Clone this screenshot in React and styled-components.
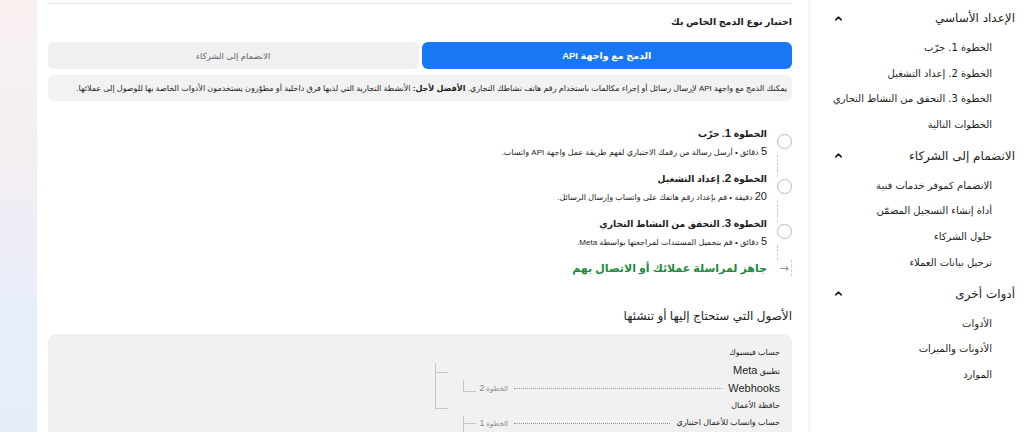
import React from "react";
import styled, { createGlobalStyle } from "styled-components";
import { ChevronUp } from "lucide-react";

const Global = createGlobalStyle`
  html, body { margin: 0; padding: 0; background: #fff; }
  body { font-family: "Liberation Sans", "DejaVu Sans", sans-serif; color: #1c1e21; }
`;

const Page = styled.div`
  display: flex;
  height: 432px;
  overflow: hidden;
  direction: rtl;
`;

const Sidebar = styled.nav`
  width: 216px;
  flex: none;
  background: #fff;
  border-left: 3px solid #f6f7f9;
  padding: 0 9px 0 22px;
  box-sizing: border-box;
`;

const Section = styled.div``;

const SectionHeader = styled.div`
  display: flex;
  justify-content: space-between;
  align-items: center;
  padding-top: 8px;
  height: 20px;
  color: #1c1e21;
  font-family: "DejaVu Sans", sans-serif;
  font-size: 12px;
`;

const Items = styled.ul`
  list-style: none;
  margin: 7px 0 0;
  padding: 0 23px 0 0;
`;

const Item = styled.li`
  height: 25.7px;
  line-height: 26px;
  font-size: 10px;
  font-family: "DejaVu Sans", sans-serif;
  color: #1c1e21;
  white-space: nowrap;
`;

const Main = styled.main`
  flex: 1;
  background: #fff;
  padding: 0 16px 0 11px;
  min-width: 0;
`;

const Strip = styled.div`
  width: 37px;
  flex: none;
  background: linear-gradient(to bottom, #f8f0ef 0%, #f5eff2 35%, #eeedf6 52%, #e8eef8 70%, #e5eef8 100%);
`;

const Divider = styled.div`
  margin-top: 3px;
  height: 1px;
  background: #e6e6e6;
`;

const Heading = styled.h2`
  margin: ${(p) => p.$mt || 0}px 0 0;
  font-size: ${(p) => p.$size || 10}px;
  line-height: 16px;
  font-weight: ${(p) => (p.$bold ? "bold" : "normal")};
  color: #1c1e21;
`;

const Tabs = styled.div`
  display: grid;
  grid-template-columns: 1fr 1fr;
  gap: 3px;
  margin-top: 12px;
`;

const Tab = styled.div`
  height: 27px;
  border-radius: 6px;
  display: flex;
  align-items: center;
  justify-content: center;
  font-size: ${(p) => (p.$active ? "9.5px" : "8.5px")};
  font-weight: ${(p) => (p.$active ? "bold" : "normal")};
  background: ${(p) => (p.$active ? "#1877f2" : "#f0f0f0")};
  color: ${(p) => (p.$active ? "#fff" : "#606770")};
`;

const Info = styled.div`
  margin-top: 6px;
  height: 26px;
  border-radius: 6px;
  background: #f2f2f2;
  padding: 0 5px;
  display: flex;
  align-items: center;
  font-size: 8px;
  white-space: nowrap;
  overflow: hidden;
  color: #1c1e21;
`;

const Steps = styled.div`
  margin-top: 24px;
`;

const StepRow = styled.div`
  display: grid;
  grid-template-columns: 15px 1fr;
  column-gap: 10px;
  height: 45px;
`;

const Rail = styled.div`
  display: flex;
  flex-direction: column;
  align-items: flex-end;
`;

const TopDash = styled.div`
  height: 7px;
  width: 0;
  border-left: 1px dashed ${(p) => (p.$show ? "#cfcfcf" : "transparent")};
`;

const Circle = styled.div`
  margin-top: 2px;
  width: 13px;
  height: 13px;
  border-radius: 50%;
  border: 1px solid #b9b9b9;
  background: #fff;
  flex: none;
`;

const Dash = styled.div`
  flex: 1;
  width: 0;
  margin-top: 6px;
  border-left: 1px dashed #cfcfcf;
`;

const StepText = styled.div``;

const StepTitle = styled.div`
  font-size: 9.2px;
  line-height: 16px;
  font-weight: bold;
  color: #1c1e21;
  b { font-family: "Liberation Sans", sans-serif; font-size: 11.5px; }
`;

const StepDesc = styled.div`
  font-size: 8px;
  line-height: 18px;
  color: #1c1e21;
  span { font-family: "Liberation Sans", sans-serif; font-size: 11px; }
`;

const LinkRow = styled.div`
  display: grid;
  grid-template-columns: 15px 1fr;
  column-gap: 10px;
  height: 16px;
`;

const ArrowCell = styled.div`
  border-right: 1px dashed #cfcfcf;
  display: flex;
  align-items: center;
  justify-content: center;
  color: #7e9a84;
  font-size: 11px;
  font-family: "DejaVu Sans", sans-serif;
`;

const GreenLink = styled.a`
  font-size: 11px;
  font-weight: bold;
  line-height: 16px;
  color: #208b3a;
  text-decoration: none;
`;

const AssetBox = styled.div`
  margin-top: 10px;
  height: 140px;
  border-radius: 8px;
  background: #f1f1f1;
  padding: 10px 12px 0 382px;
  display: flex;
  align-items: flex-start;
`;

const AssetRows = styled.div`
  flex: 1;
  min-width: 0;
`;

const AssetRow = styled.div`
  height: 17.5px;
  display: flex;
  align-items: center;
  gap: 6px;
  font-size: 8px;
  color: #1c1e21;
  span.latin { font-family: "Liberation Sans", sans-serif; font-size: 11px; }
`;

const Dots = styled.div`
  flex: 1;
  border-top: 1px dotted #8f8f8f;
  margin-top: 1px;
`;

const StepTag = styled.div`
  font-size: 7px;
  color: #8a8a8a;
  width: 32px;
  flex: none;
  b { font-family: "Liberation Sans", sans-serif; font-weight: normal; font-size: 9px; }
`;

const Tree = styled.svg`
  flex: none;
  display: block;
`;

const sections = [
  {
    title: "الإعداد الأساسي",
    items: ["الخطوة 1. جرّب", "الخطوة 2. إعداد التشغيل", "الخطوة 3. التحقق من النشاط التجاري", "الخطوات التالية"],
  },
  {
    title: "الانضمام إلى الشركاء",
    items: ["الانضمام كموفر خدمات فنية", "أداة إنشاء التسجيل المضمّن", "حلول الشركاء", "ترحيل بيانات العملاء"],
  },
  {
    title: "أدوات أخرى",
    items: ["الأدوات", "الأذونات والميزات", "الموارد"],
  },
];

const steps = [
  { n: "1", title: "جرّب", mins: "5", desc: "دقائق • أرسل رسالة من رقمك الاختباري لفهم طريقة عمل واجهة API واتساب." },
  { n: "2", title: "إعداد التشغيل", mins: "20", desc: "دقيقة • قم بإعداد رقم هاتفك على واتساب وإرسال الرسائل." },
  { n: "3", title: "التحقق من النشاط التجاري", mins: "5", desc: "دقائق • قم بتحميل المستندات لمراجعتها بواسطة Meta." },
];

export default function App() {
  return (
    <>
      <Global />
      <Page dir="rtl">
        <Sidebar>
          {sections.map((s) => (
            <Section key={s.title}>
              <SectionHeader>
                <span>{s.title}</span>
                <ChevronUp size={11} strokeWidth={3.5} color="#1c1e21" />
              </SectionHeader>
              <Items>
                {s.items.map((it) => (
                  <Item key={it}>{it}</Item>
                ))}
              </Items>
            </Section>
          ))}
        </Sidebar>
        <Main>
          <Divider />
          <Heading $mt={10} $size={9.5} $bold>اختيار نوع الدمج الخاص بك</Heading>
          <Tabs>
            <Tab $active>الدمج مع واجهة API</Tab>
            <Tab>الانضمام إلى الشركاء</Tab>
          </Tabs>
          <Info>
            <span>
              يمكنك الدمج مع واجهة API لإرسال رسائل أو إجراء مكالمات باستخدام رقم هاتف نشاطك التجاري.{" "}
              <strong>الأفضل لأجل:</strong> الأنشطة التجارية التي لديها فرق داخلية أو مطوّرون يستخدمون الأدوات الخاصة بها للوصول إلى عملائها.
            </span>
          </Info>
          <Steps>
            {steps.map((s, i) => (
              <StepRow key={s.n}>
                <Rail>
                  <TopDash $show={i > 0} />
                  <Circle />
                  <Dash />
                </Rail>
                <StepText>
                  <StepTitle>
                    الخطوة <b>{s.n}</b>. {s.title}
                  </StepTitle>
                  <StepDesc>
                    <span>{s.mins}</span> {s.desc}
                  </StepDesc>
                </StepText>
              </StepRow>
            ))}
            <LinkRow>
              <ArrowCell>→</ArrowCell>
              <GreenLink href="#">جاهز لمراسلة عملائك أو الاتصال بهم</GreenLink>
            </LinkRow>
          </Steps>
          <Heading $mt={32} $size={12}>الأصول التي ستحتاج إليها أو تنشئها</Heading>
          <AssetBox>
            <AssetRows>
              <AssetRow>حساب فيسبوك</AssetRow>
              <AssetRow>
                <span>
                  تطبيق <span className="latin">Meta</span>
                </span>
              </AssetRow>
              <AssetRow>
                <span className="latin">Webhooks</span>
                <Dots />
                <StepTag>
                  الخطوة <b>2</b>
                </StepTag>
              </AssetRow>
              <AssetRow>حافظة الأعمال</AssetRow>
              <AssetRow>
                <span>حساب واتساب للأعمال اختباري</span>
                <Dots />
                <StepTag>
                  الخطوة <b>1</b>
                </StepTag>
              </AssetRow>
            </AssetRows>
            <Tree width="46" height="100" viewBox="0 0 46 100">
              <g stroke="#c6c6c6" strokeWidth="1" fill="none" shapeRendering="crispEdges">
                <path d="M5.5 19 V64.5 M5.5 28.5 H18 M5.5 64.5 H18" />
                <path d="M33.5 36 V47.5 H46" />
                <path d="M33.5 72 V100 M33.5 79.5 H46" />
              </g>
            </Tree>
          </AssetBox>
        </Main>
        <Strip />
      </Page>
    </>
  );
}
